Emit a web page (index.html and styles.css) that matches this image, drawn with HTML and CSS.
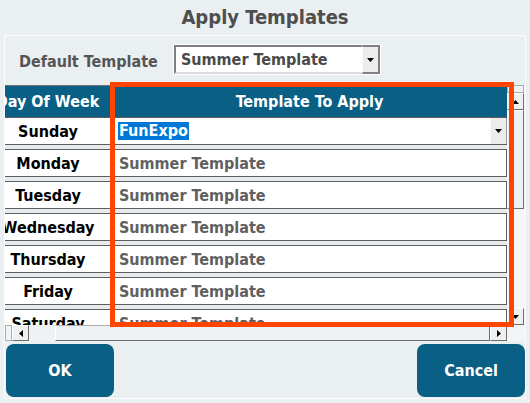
FILE: index.html
```html
<!DOCTYPE html>
<html lang="en">
<head>
<meta charset="utf-8">
<title>Apply Templates</title>
<link rel="stylesheet" href="styles.css">
</head>
<body>
<h1 class="title">Apply Templates</h1>
<div class="panel">
  <div class="default-row">
    <span class="label">Default Template</span>
    <div class="combo">
      <span class="combo-text">Summer Template</span>
      <span class="combo-btn"><svg width="7" height="4" viewBox="0 0 7 4"><path d="M0 0h7L3.5 4z"/></svg></span>
    </div>
  </div>

  <div class="grid">
    <div class="grid-main">
      <div class="viewport">
        <div class="sheet">
          <div class="head">
            <div class="hcell hday">Day Of Week</div>
            <div class="hcell htpl">Template To Apply</div>
          </div>
          <div class="row">
            <div class="day">Sunday</div>
            <div class="tpl editing">
              <span class="selected">FunExpo</span>
              <span class="cell-btn"><svg width="7" height="4" viewBox="0 0 7 4"><path d="M0 0h7L3.5 4z"/></svg></span>
            </div>
          </div>
          <div class="row"><div class="day">Monday</div><div class="tpl">Summer Template</div></div>
          <div class="row"><div class="day">Tuesday</div><div class="tpl">Summer Template</div></div>
          <div class="row"><div class="day">Wednesday</div><div class="tpl">Summer Template</div></div>
          <div class="row"><div class="day">Thursday</div><div class="tpl">Summer Template</div></div>
          <div class="row"><div class="day">Friday</div><div class="tpl">Summer Template</div></div>
          <div class="row"><div class="day">Saturday</div><div class="tpl">Summer Template</div></div>
        </div>
      </div>
      <div class="vscroll">
        <div class="v-cap"></div>
        <div class="sb-btn v-btn"><svg width="7" height="4" viewBox="0 0 7 4"><path d="M0 4h7L3.5 0z"/></svg></div>
        <div class="v-thumb"></div>
        <div class="v-track"></div>
        <div class="sb-btn v-btn"><svg width="7" height="4" viewBox="0 0 7 4"><path d="M0 0h7L3.5 4z"/></svg></div>
      </div>
    </div>
    <div class="hscroll-row">
      <div class="hscroll">
        <div class="h-cap"></div>
        <div class="sb-btn h-btn"><svg width="4" height="7" viewBox="0 0 4 7"><path d="M4 0v7L0 3.5z"/></svg></div>
        <div class="h-track"></div>
        <div class="h-thumb"></div>
        <div class="sb-btn h-btn"><svg width="4" height="7" viewBox="0 0 4 7"><path d="M0 0v7L4 3.5z"/></svg></div>
      </div>
      <div class="corner"></div>
    </div>
  </div>

  <div class="actions">
    <button class="btn" type="button">OK</button>
    <button class="btn" type="button">Cancel</button>
  </div>
</div>

<div class="focus-ring"></div>
</body>
</html>
```

FILE: styles.css
```css
* {
  box-sizing: border-box;
}

html, body {
  margin: 0;
  padding: 0;
}

body {
  width: 530px;
  height: 403px;
  overflow: hidden;
  position: relative;
  background: #eaeff2;
  font-family: "DejaVu Sans Condensed", "DejaVu Sans", sans-serif;
  font-stretch: semi-condensed;
  font-weight: bold;
  font-size: 16px;
}

.title {
  margin: 0;
  height: 35px;
  line-height: 35px;
  text-align: center;
  font-size: 20px;
  font-weight: bold;
  color: #4e4e4e;
}

/* dialog body */
.panel {
  margin-left: 4px;
  width: 522px;
  height: 364px;
  border: 1px solid #fbfcfd;
  display: flex;
  flex-direction: column;
}

.default-row {
  height: 49px;
  display: flex;
  align-items: flex-start;
  padding-left: 14px;
}

.label {
  width: 154px;
  margin-top: 16px;
  color: #555555;
}

.combo {
  margin-top: 8px;
  width: 208px;
  height: 31px;
  border: 1px solid #ffffff;
  display: flex;
}

.combo-text {
  flex: 1;
  background: #ffffff;
  border-top: 2px solid #808080;
  border-left: 2px solid #808080;
  border-bottom: 2px solid #dcdcdc;
  padding-left: 5px;
  line-height: 25px;
  color: #4a4a4a;
}

.combo-btn {
  width: 18px;
  background: #ececec;
  border-top: 2px solid #808080;
  border-right: 2px solid #808080;
  border-bottom: 2px solid #808080;
  border-left: 1px solid #f8f8f8;
  display: flex;
  align-items: center;
  justify-content: center;
}

/* data grid */
.grid {
  height: 256px;
  display: flex;
  flex-direction: column;
}

.grid-main {
  height: 240px;
  display: flex;
}

.viewport {
  width: 502px;
  height: 240px;
  overflow: hidden;
  background: #e6ebee;
}

/* horizontally scrolled content */
.sheet {
  width: 523px;
  margin-left: -21px;
}

.head {
  height: 32px;
  display: flex;
  border-top: 1px solid #6f7478;
  background: #0a5f84;
  color: #ffffff;
}

.hcell {
  display: flex;
  align-items: center;
  justify-content: center;
  white-space: nowrap;
}

.hday {
  width: 128px;
  border-right: 1px solid #3f7c98;
}

.htpl {
  flex: 1;
}

.row {
  height: 28px;
  display: flex;
  margin-bottom: 4px;
}

.day {
  width: 128px;
  background: #ffffff;
  border-top: 1px solid #5e5e5e;
  border-bottom: 1px solid #5e5e5e;
  display: flex;
  align-items: center;
  justify-content: center;
  white-space: nowrap;
  color: #000000;
}

.tpl {
  flex: 1;
  background: #ffffff;
  border: 1px solid #5e5e5e;
  display: flex;
  align-items: center;
  padding-left: 6px;
  white-space: nowrap;
  color: #606060;
}

.tpl.editing {
  padding-left: 5px;
  justify-content: space-between;
  border-right: none;
}

.selected {
  background: #0078d7;
  color: #ffffff;
  padding: 0 1px;
  line-height: 18px;
}

.cell-btn {
  width: 17px;
  height: 26px;
  background: #ececec;
  border-left: 1px solid #f7f7f7;
  border-right: 1px solid #9a9a9a;
  display: flex;
  align-items: center;
  justify-content: center;
}

/* scrollbars */
.sb-btn {
  background: #f0f0f0;
  border-top: 1px solid #ffffff;
  border-left: 1px solid #ffffff;
  border-right: 1px solid #6d6d6d;
  border-bottom: 1px solid #6d6d6d;
  display: flex;
  align-items: center;
  justify-content: center;
}

.vscroll {
  width: 18px;
  height: 240px;
  display: flex;
  flex-direction: column;
  padding-right: 1px;
  background: #f4f6f8;
}

.v-cap {
  height: 8px;
  border: 1px solid #a9adb0;
  background: #f0f3f5;
}

.v-btn {
  height: 17px;
}

.v-thumb {
  height: 99px;
  background: #edf1f3;
  border-top: 1px solid #ffffff;
  border-left: 1px solid #ffffff;
  border-right: 1px solid #6d6d6d;
  border-bottom: 1px solid #6d6d6d;
}

.v-track {
  flex: 1;
  background: #f4f6f8;
}

.hscroll-row {
  height: 16px;
  display: flex;
}

.hscroll {
  width: 502px;
  display: flex;
  background: #eef2f4;
}

.h-cap {
  width: 7px;
  border: 1px solid #a9adb0;
  background: #f0f3f5;
}

.h-btn {
  width: 17px;
}

.h-track {
  width: 26px;
  background: #eef2f4;
}

.h-thumb {
  flex: 1;
  background: #edf1f3;
  border-top: 1px solid #a9adb0;
  border-left: 1px solid #ffffff;
  border-bottom: 1px solid #6d6d6d;
  border-right: 1px solid #6d6d6d;
}

.corner {
  width: 18px;
  background: #f2f4f6;
}

/* dialog buttons */
.actions {
  height: 57px;
  display: flex;
  justify-content: space-between;
  padding: 3px 0 1px 1px;
}

.btn {
  width: 108px;
  height: 53px;
  border: none;
  border-radius: 8px;
  background: #0a5f84;
  color: #ffffff;
  font-family: inherit;
  font-stretch: inherit;
  font-weight: bold;
  font-size: 16px;
  padding: 0;
}

/* highlight around the template column */
.focus-ring {
  position: absolute;
  left: 110px;
  top: 82px;
  width: 404px;
  height: 245px;
  border: 5px solid #ff4500;
  pointer-events: none;
}
```
